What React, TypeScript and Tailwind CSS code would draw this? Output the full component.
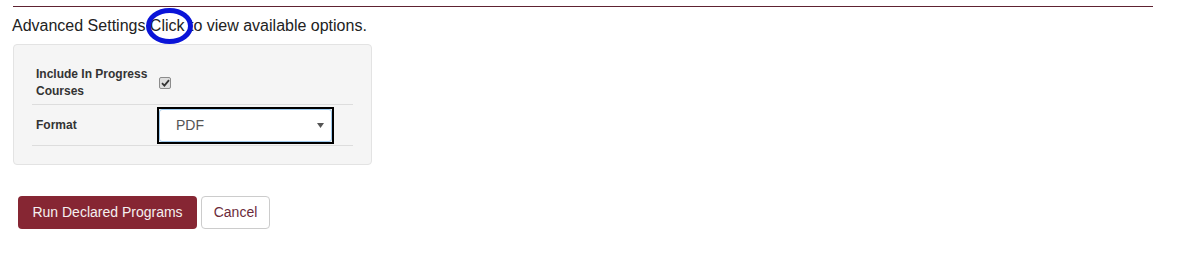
import React from "react";

export default function App() {
  return (
    <div className="min-h-[262px] bg-white pl-[13px] pt-[6px] font-['Liberation_Sans',Arial,sans-serif]">
      <div className="h-px w-[1140px] bg-[#5e2231]" />
      <div className="relative -ml-px mt-[8px] text-[16px] leading-[22px] text-[#222]">
        Advanced Settings Click to view available options.
        <span className="pointer-events-none absolute left-[134px] top-[-7px] h-[36px] w-[47px] rounded-[50%] border-[5px] border-[#0a14d8]" />
      </div>
      <div className="mt-[7px] w-[359px] rounded-[4px] border border-[#e3e3e3] bg-[#f5f5f5] px-[18px] pt-[17px] pb-[18px]">
        <div className="flex h-[42px] items-center">
          <div className="w-[125px] pl-[4px] text-[12px] font-bold leading-[17px] text-[#333]">
            Include In Progress
            <br />
            Courses
          </div>
          <span className="ml-[2px] flex h-[12px] w-[12px] items-center justify-center rounded-[2px] border border-[#8c8c8c] bg-[#dedede]">
            <svg width="9" height="8" viewBox="0 0 9 8">
              <path d="M1 4.2 L3.4 6.6 L8 1.2" fill="none" stroke="#333" strokeWidth="1.8" />
            </svg>
          </span>
        </div>
        <div className="flex h-[42px] items-center border-y border-[#dddddd]">
          <div className="w-[125px] pl-[4px] text-[12px] font-bold leading-[17px] text-[#333]">Format</div>
          <div className="h-[37px] w-[177px] border-2 border-black">
            <div className="flex h-full items-center justify-between rounded-[3px] border border-[#9fcaee] bg-white pl-[16px] pr-[7px] text-[14px] text-[#555]">
              <span>PDF</span>
              <svg width="7" height="5" viewBox="0 0 7 5">
                <path d="M0 0 L7 0 L3.5 5 Z" fill="#555" />
              </svg>
            </div>
          </div>
        </div>
      </div>
      <div className="ml-[5px] mt-[31px] flex gap-[4px]">
        <button className="h-[33px] w-[179px] rounded-[4px] bg-[#862633] text-[14px] text-[#f5f0f0]">
          Run Declared Programs
        </button>
        <button className="h-[33px] w-[69px] rounded-[4px] border border-[#cccccc] bg-white text-[14px] text-[#6b2a3a]">
          Cancel
        </button>
      </div>
    </div>
  );
}
